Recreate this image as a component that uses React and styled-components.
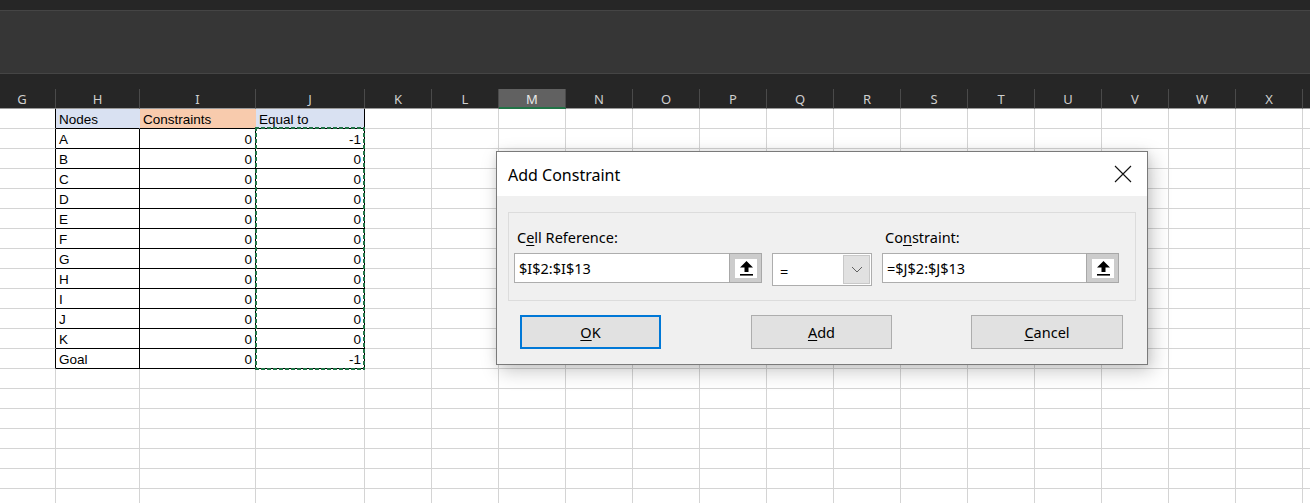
import React from 'react'
import styled, { createGlobalStyle } from 'styled-components'

const GlobalStyle = createGlobalStyle`
  html, body {
    margin: 0;
    padding: 0;
    background: #ffffff;
    overflow: hidden;
  }
  * { box-sizing: border-box; }
`

const columns = [
  { l: 'G', w: 67 },
  { l: 'H', w: 84 },
  { l: 'I', w: 116 },
  { l: 'J', w: 109 },
  ...'KLMNOPQRSTUVWX'.split('').map(l => ({ l, w: 67 })),
  { l: 'Y', w: 67, hidden: true }
]

const nodes = ['A', 'B', 'C', 'D', 'E', 'F', 'G', 'H', 'I', 'J', 'K', 'Goal']
const equalTo = [-1, 0, 0, 0, 0, 0, 0, 0, 0, 0, 0, -1]
const TOTAL_ROWS = 20

function cellFor(row, col) {
  // returns props for a sheet cell
  const inTable = row <= nodes.length && col >= 1 && col <= 3
  if (row === 0) {
    if (col === 1) return { text: 'Nodes', bg: '#d9e1f2', right: '#d9e1f2', bottom: '#000' }
    if (col === 2) return { text: 'Constraints', bg: '#f8cbad', right: '#f8cbad', bottom: '#000' }
    if (col === 3) return { text: 'Equal to', bg: '#d9e1f2', right: '#000', bottom: '#000' }
  }
  if (inTable) {
    const i = row - 1
    if (col === 1) return { text: nodes[i], right: '#000', bottom: '#000' }
    if (col === 2) return { text: '0', num: true, right: '#000', bottom: '#000' }
    if (col === 3) return { text: String(equalTo[i]), num: true, right: '#000', bottom: '#000' }
  }
  if (col === 0 && row <= nodes.length) return { right: '#000' }
  return {}
}

function UploadIcon() {
  return (
    <svg width="13" height="15" viewBox="0 0 13 15">
      <polygon points="6.5,0 13,6.5 8.5,6.5 8.5,11 4.5,11 4.5,6.5 0,6.5" fill="#000" />
      <rect x="0" y="13" width="13" height="1.6" fill="#000" />
    </svg>
  )
}

function RefField({ value, width }) {
  return (
    <Field $w={width}>
      <FieldText>{value}</FieldText>
      <RefButton>
        <RefButtonFace>
          <UploadIcon />
        </RefButtonFace>
      </RefButton>
    </Field>
  )
}

function App() {
  return (
    <Page>
      <GlobalStyle />
      <TitleStrip />
      <Ribbon />
      <Sheet>
        <HeaderRow>
          {columns.map(c => (
            <ColHead key={c.l} $w={c.w} $active={c.l === 'M'}>{c.hidden ? '' : c.l}</ColHead>
          ))}
        </HeaderRow>
        {Array.from({ length: TOTAL_ROWS }).map((_, r) => (
          <Row key={r}>
            {columns.map((c, ci) => {
              const p = cellFor(r, ci)
              return (
                <Cell
                  key={c.l}
                  $w={c.w}
                  $bg={p.bg}
                  $right={p.right}
                  $bottom={p.bottom}
                  $num={p.num}
                >
                  {p.text}
                </Cell>
              )
            })}
          </Row>
        ))}
      </Sheet>
      <Marquee />

      <Dialog>
        <DialogTitle>
          <TitleText>Add Constraint</TitleText>
          <CloseButton>
            <svg width="18" height="18" viewBox="0 0 18 18">
              <path d="M1 1 L17 17 M17 1 L1 17" stroke="#111" strokeWidth="1.1" fill="none" />
            </svg>
          </CloseButton>
        </DialogTitle>
        <DialogBody>
          <GroupBox>
            <FieldColumn>
              <Label>C<u>e</u>ll Reference:</Label>
              <RefField value="$I$2:$I$13" width={248} />
            </FieldColumn>
            <SelectBox>
              <SelectText>=</SelectText>
              <SelectArrow>
                <svg width="12" height="7" viewBox="0 0 12 7">
                  <path d="M1 1 L6 6 L11 1" stroke="#606060" strokeWidth="1" fill="none" />
                </svg>
              </SelectArrow>
            </SelectBox>
            <FieldColumn>
              <Label>Co<u>n</u>straint:</Label>
              <RefField value="=$J$2:$J$13" width={237} />
            </FieldColumn>
          </GroupBox>
          <ButtonRow>
            <DialogButton $w={141} $primary><u>O</u>K</DialogButton>
            <DialogButton $w={141} $ml="90px"><u>A</u>dd</DialogButton>
            <DialogButton $w={152} $ml="auto"><u>C</u>ancel</DialogButton>
          </ButtonRow>
        </DialogBody>
      </Dialog>
    </Page>
  )
}

export default App

// ---- page + excel chrome
const Page = styled.div`
  position: relative;
  width: 1310px;
  height: 503px;
  overflow: hidden;
  background: #ffffff;
`

const TitleStrip = styled.div`
  height: 10px;
  background: #262626;
`

const Ribbon = styled.div`
  height: 64px;
  background: #363636;
  border-top: 1px solid #454545;
  border-bottom: 1px solid #454545;
`

// ---- sheet
const Sheet = styled.div`
  margin-left: -11px;
`

const HeaderRow = styled.div`
  display: flex;
  background: #262626;
  padding-top: 15px;
`

const ColHead = styled.div`
  flex: none;
  width: ${p => p.$w}px;
  height: 20px;
  display: flex;
  align-items: center;
  justify-content: center;
  font-family: "Noto Sans", "Open Sans", sans-serif;
  font-size: 13px;
  color: ${p => (p.$active ? '#e8e8e8' : '#cfcfcf')};
  background: ${p => (p.$active ? '#616161' : '#262626')};
  border-right: 1px solid #4a4a4a;
  border-bottom: ${p => (p.$active ? '2px solid #217346' : '1px solid #9a9a9a')};
  padding-top: ${p => (p.$active ? '1px' : '0')};
`

const Row = styled.div`
  display: flex;
`

const Cell = styled.div`
  flex: none;
  width: ${p => p.$w}px;
  height: 20px;
  padding: 0 3px 0 3px;
  background: ${p => p.$bg || '#ffffff'};
  border-right: 1px solid ${p => p.$right || '#d4d4d4'};
  border-bottom: 1px solid ${p => p.$bottom || '#d4d4d4'};
  font-family: "Liberation Sans", Arial, sans-serif;
  font-size: 13.5px;
  line-height: 21px;
  color: #000;
  text-align: ${p => (p.$num ? 'right' : 'left')};
  white-space: nowrap;
  overflow: hidden;
`

// copy marquee around the "Equal to" values
const dashH = 'repeating-linear-gradient(90deg, #217346 0 4px, transparent 4px 6px)'
const dashV = 'repeating-linear-gradient(180deg, #217346 0 4px, transparent 4px 6px)'

const Marquee = styled.div`
  position: absolute;
  left: 255px;
  top: 127px;
  width: 110px;
  height: 243px;
  background:
    ${dashH} left top / 100% 2px no-repeat,
    ${dashH} left bottom / 100% 2px no-repeat,
    ${dashV} left top / 2px 100% no-repeat,
    ${dashV} right top / 2px 100% no-repeat;
  pointer-events: none;
`

// ---- dialog
const Dialog = styled.div`
  position: absolute;
  left: 496px;
  top: 151px;
  width: 652px;
  height: 214px;
  border: 1px solid #7a7a7a;
  background: #f0f0f0;
  box-shadow: 4px 6px 18px rgba(0, 0, 0, 0.22), 0 0 8px rgba(0, 0, 0, 0.08);
  display: flex;
  flex-direction: column;
  font-family: "Noto Sans", "Open Sans", sans-serif;
  color: #000;
`

const DialogTitle = styled.div`
  height: 44px;
  background: #ffffff;
  display: flex;
  align-items: center;
  justify-content: space-between;
  padding: 0 15px 0 11px;
`

const TitleText = styled.div`
  font-size: 16px;
  padding-top: 1px;
`

const CloseButton = styled.div`
  width: 18px;
  height: 18px;
  display: flex;
`

const DialogBody = styled.div`
  flex: 1;
  padding: 16px 0 0 11px;
`

const GroupBox = styled.div`
  width: 628px;
  height: 89px;
  border: 1px solid #dcdcdc;
  display: flex;
  align-items: flex-end;
  gap: 10px;
  padding: 0 0 14px 5px;
`

const FieldColumn = styled.div`
  display: flex;
  flex-direction: column;
  gap: 6px;
  margin-bottom: 3px;
`

const Label = styled.div`
  font-size: 14.5px;
  padding-left: 3px;
  line-height: 20px;
  u { text-underline-offset: 2px; }
`

const Field = styled.div`
  width: ${p => p.$w}px;
  height: 30px;
  background: #ffffff;
  border: 1px solid #adadad;
  display: flex;
  align-items: center;
  justify-content: space-between;
`

const FieldText = styled.div`
  font-size: 14.5px;
  padding-left: 4px;
`

const RefButton = styled.div`
  width: 33px;
  height: 30px;
  margin: -1px -1px -1px 0;
  background: #cccccc;
  border: 1px solid #a8a8a8;
  padding: 5px 4px 4px 5px;
`

const RefButtonFace = styled.div`
  width: 100%;
  height: 100%;
  background: #ffffff;
  display: flex;
  align-items: center;
  justify-content: center;
`

const SelectBox = styled.div`
  width: 100px;
  height: 33px;
  background: #ffffff;
  border: 1px solid #adadad;
  display: flex;
  align-items: center;
  justify-content: space-between;
  padding: 1px 1px 1px 7px;
`

const SelectText = styled.div`
  font-size: 14.5px;
  padding-top: 2px;
`

const SelectArrow = styled.div`
  width: 27px;
  height: 29px;
  background: #e1e1e1;
  border: 1px solid #c8c8c8;
  display: flex;
  align-items: center;
  justify-content: center;
`

const ButtonRow = styled.div`
  display: flex;
  padding: 14px 24px 0 12px;
`

const DialogButton = styled.div`
  flex: none;
  width: ${p => p.$w}px;
  height: 34px;
  background: #e1e1e1;
  border: ${p => (p.$primary ? '2px solid #0078d7' : '1px solid #adadad')};
  display: flex;
  align-items: center;
  justify-content: center;
  font-size: 14.5px;
  margin-left: ${p => p.$ml || '0'};
  u { text-underline-offset: 2px; }
`
